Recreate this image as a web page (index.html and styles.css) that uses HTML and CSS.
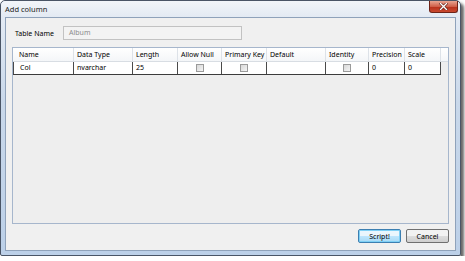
FILE: index.html
```html
<!DOCTYPE html>
<html lang="en">
<head>
    <meta charset="UTF-8">
    <title>Add column</title>
    <link rel="stylesheet" href="styles.css">
</head>
<body>
    <div class="window">
        <div class="titlebar">
            <span class="title">Add column</span>
            <div class="close-btn">
                <svg width="9" height="7" viewBox="0 0 9 7">
                    <path d="M1.5 0.5 L7.5 6.5 M7.5 0.5 L1.5 6.5" stroke="#5a1a10" stroke-width="2.6" stroke-linecap="square"/>
                    <path d="M1.5 0.5 L7.5 6.5 M7.5 0.5 L1.5 6.5" stroke="#ffffff" stroke-width="1.4" stroke-linecap="square"/>
                </svg>
            </div>
        </div>

        <div class="client">
            <div class="name-row">
                <label class="name-label">Table Name</label>
                <div class="textbox">Album</div>
            </div>

            <div class="grid">
                <div class="header-row">
                    <div class="hcell first">Name</div>
                    <div class="hcell">Data Type</div>
                    <div class="hcell">Length</div>
                    <div class="hcell">Allow Null</div>
                    <div class="hcell">Primary Key</div>
                    <div class="hcell">Default</div>
                    <div class="hcell">Identity</div>
                    <div class="hcell">Precision</div>
                    <div class="hcell">Scale</div>
                    <div class="hcell filler"></div>
                </div>
                <div class="data-row">
                    <div class="cell first">Col</div>
                    <div class="cell">nvarchar</div>
                    <div class="cell">25</div>
                    <div class="cell check"><span class="box"></span></div>
                    <div class="cell check"><span class="box"></span></div>
                    <div class="cell"></div>
                    <div class="cell check"><span class="box"></span></div>
                    <div class="cell">0</div>
                    <div class="cell">0</div>
                </div>
            </div>

            <div class="buttons">
                <button class="btn default">Script!</button>
                <button class="btn">Cancel</button>
            </div>
        </div>
    </div>
</body>
</html>
```

FILE: styles.css
```css
body {
    margin: 0;
    background: #ffffff;
    font-family: "Noto Sans", "Open Sans", sans-serif;
    font-size: 7px;
    color: #000;
}
.window {
    width: 459px;
    height: 254px;
    border: 1px solid #4a5566;
    border-radius: 5px 5px 2px 2px;
    background: linear-gradient(to bottom, #e8eef6, #c9d8ea 40%, #bcd0e8);
    box-shadow: 3px 3px 3px rgba(0, 0, 0, 0.6);
    display: flex;
    flex-direction: column;
}
.titlebar {
    height: 16px;
    display: flex;
    justify-content: space-between;
    align-items: flex-start;
    padding-left: 4px;
    background: linear-gradient(to bottom, #f2f5f9, #e3eaf3);
    border-radius: 5px 5px 0 0;
}
.title {
    font-size: 7.5px;
    line-height: 16px;
    color: #1a1a1a;
}
.close-btn {
    width: 27px;
    height: 11px;
    margin-right: 2px;
    border: 1px solid #6e2418;
    border-top: none;
    border-radius: 0 0 3px 3px;
    background: linear-gradient(to bottom, #e8a592, #d0604a 50%, #b8321d 55%, #c9492f);
    display: flex;
    align-items: center;
    justify-content: center;
}
.client {
    flex: 1;
    margin: 0 4px 4px 4px;
    background: #f0f0f0;
    border: 1px solid #8fa2ba;
    display: flex;
    flex-direction: column;
    padding: 8px 6px 5px 6px;
}
.name-row {
    display: flex;
    align-items: center;
    height: 14px;
    padding-left: 3px;
}
.name-label {
    width: 48px;
}
.textbox {
    width: 172px;
    height: 12px;
    line-height: 12px;
    border: 1px solid #c2c2c2;
    background: #f3f3f3;
    color: #8c8c8c;
    padding-left: 5px;
}
.grid {
    margin-top: 7px;
    height: 175px;
    border: 1px solid #a6b6cc;
    background: #eeeeee;
}
.header-row {
    display: grid;
    grid-template-columns: 61px 59px 45px 44px 45px 59px 43px 36px 36px 1fr;
    height: 13px;
    background: linear-gradient(to bottom, #ffffff, #f4f6f8);
    border-bottom: 1px solid #d8dde3;
}
.hcell {
    border-right: 1px solid #dde2e8;
    padding-left: 3px;
    line-height: 13px;
    white-space: nowrap;
    overflow: hidden;
}
.hcell.first {
    padding-left: 6px;
}
.hcell.filler {
    border-right: none;
}
.data-row {
    display: grid;
    grid-template-columns: 61px 59px 45px 44px 45px 59px 43px 36px 36px;
    width: 428px;
    height: 12px;
    background: #ffffff;
    border-bottom: 1px solid #3c3c3c;
}
.cell {
    border-right: 1px solid #4a4a4a;
    padding-left: 3px;
    line-height: 12px;
    white-space: nowrap;
}
.cell.first {
    padding-left: 6px;
    border-left: 1px solid #4a4a4a;
}
.cell.check {
    display: flex;
    align-items: center;
    justify-content: center;
    padding-left: 0;
}
.box {
    width: 6px;
    height: 6px;
    border: 1px solid #9a9a9a;
    background: linear-gradient(to bottom right, #d8d8d8, #f4f4f4);
}
.buttons {
    display: flex;
    justify-content: flex-end;
    gap: 5px;
    margin-top: 5px;
}
.btn {
    width: 43px;
    height: 14px;
    padding: 0;
    font-family: inherit;
    font-size: 7px;
    color: #000;
    border: 1px solid #707070;
    border-radius: 2px;
    background: linear-gradient(to bottom, #f2f2f2 50%, #dddddd 50%, #cfcfcf);
}
.btn.default {
    border-color: #3c7fb1;
    background: linear-gradient(to bottom, #eaf6fd 50%, #bee6fd 50%, #a7d9f5);
    box-shadow: inset 0 0 0 1px #7fd0f5;
}
```
